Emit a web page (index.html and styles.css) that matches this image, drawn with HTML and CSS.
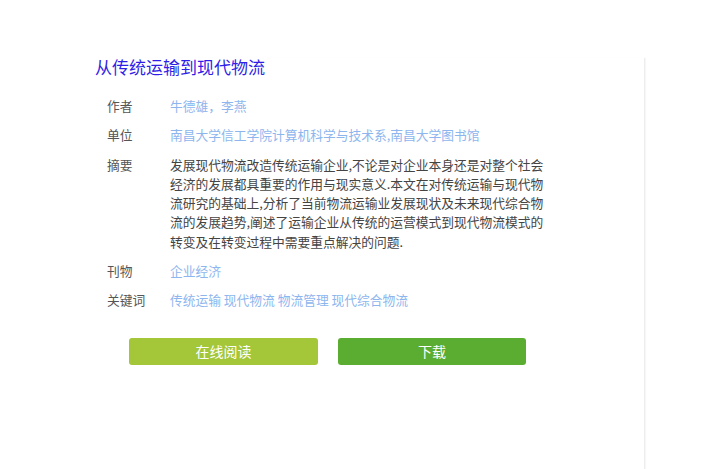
FILE: index.html
```html
<!DOCTYPE html>
<html lang="zh-CN">
<head>
<meta charset="utf-8">
<title>从传统运输到现代物流</title>
<link rel="stylesheet" href="styles.css">
</head>
<body>
<div class="panel">
  <h1 class="title">从传统运输到现代物流</h1>
  <div class="rows">
    <div class="row">
      <div class="label">作者</div>
      <div class="value"><a class="link">牛德雄，李燕</a></div>
    </div>
    <div class="row">
      <div class="label">单位</div>
      <div class="value"><a class="link">南昌大学信工学院计算机科学与技术系,南昌大学图书馆</a></div>
    </div>
    <div class="row">
      <div class="label">摘要</div>
      <div class="value abstract">发展现代物流改造传统运输企业,不论是对企业本身还是对整个社会经济的发展都具重要的作用与现实意义.本文在对传统运输与现代物流研究的基础上,分析了当前物流运输业发展现状及未来现代综合物流的发展趋势,阐述了运输企业从传统的运营模式到现代物流模式的转变及在转变过程中需要重点解决的问题.</div>
    </div>
    <div class="row">
      <div class="label">刊物</div>
      <div class="value"><a class="link">企业经济</a></div>
    </div>
    <div class="row">
      <div class="label">关键词</div>
      <div class="value"><a class="link">传统运输</a> <a class="link">现代物流</a> <a class="link">物流管理</a> <a class="link">现代综合物流</a></div>
    </div>
  </div>
  <div class="actions">
    <a class="btn btn-read">在线阅读</a>
    <a class="btn btn-down">下载</a>
  </div>
</div>
</body>
</html>
```
FILE: styles.css
```css
html, body {
  margin: 0;
  padding: 0;
  background: #ffffff;
}
body {
  font-family: "Noto Sans CJK SC", "Microsoft YaHei", sans-serif;
  overflow: hidden;
}
.panel {
  margin-top: 58px;
  margin-left: 95px;
  width: 550px;
  min-height: calc(100vh - 58px);
  border-right: 1px solid #ededed;
  box-shadow: 1px 0 1px rgba(0,0,0,0.03);
  box-sizing: border-box;
}
.title {
  margin: 0;
  font-size: 17px;
  line-height: 18px;
  font-weight: normal;
  color: #2f1fe6;
}
.rows {
  margin-top: 15px;
  padding-left: 12px;
}
.row {
  display: flex;
  padding: 5px 0;
  font-size: 12.75px;
  line-height: 19.3px;
}
.label {
  width: 63px;
  flex: none;
  color: #555555;
}
.value {
  color: #444444;
}
.abstract {
  width: 378px;
  color: #444444;
}
.link {
  color: #8db6ee;
  text-decoration: none;
}
.actions {
  display: flex;
  gap: 20px;
  margin-top: 23px;
  padding-left: 34px;
}
.btn {
  display: flex;
  align-items: center;
  justify-content: center;
  height: 27px;
  border-radius: 3px;
  color: #ffffff;
  font-size: 14px;
  text-decoration: none;
}
.btn-read {
  width: 189px;
  background: #a4c639;
}
.btn-down {
  width: 188px;
  background: #5bad32;
}
```
